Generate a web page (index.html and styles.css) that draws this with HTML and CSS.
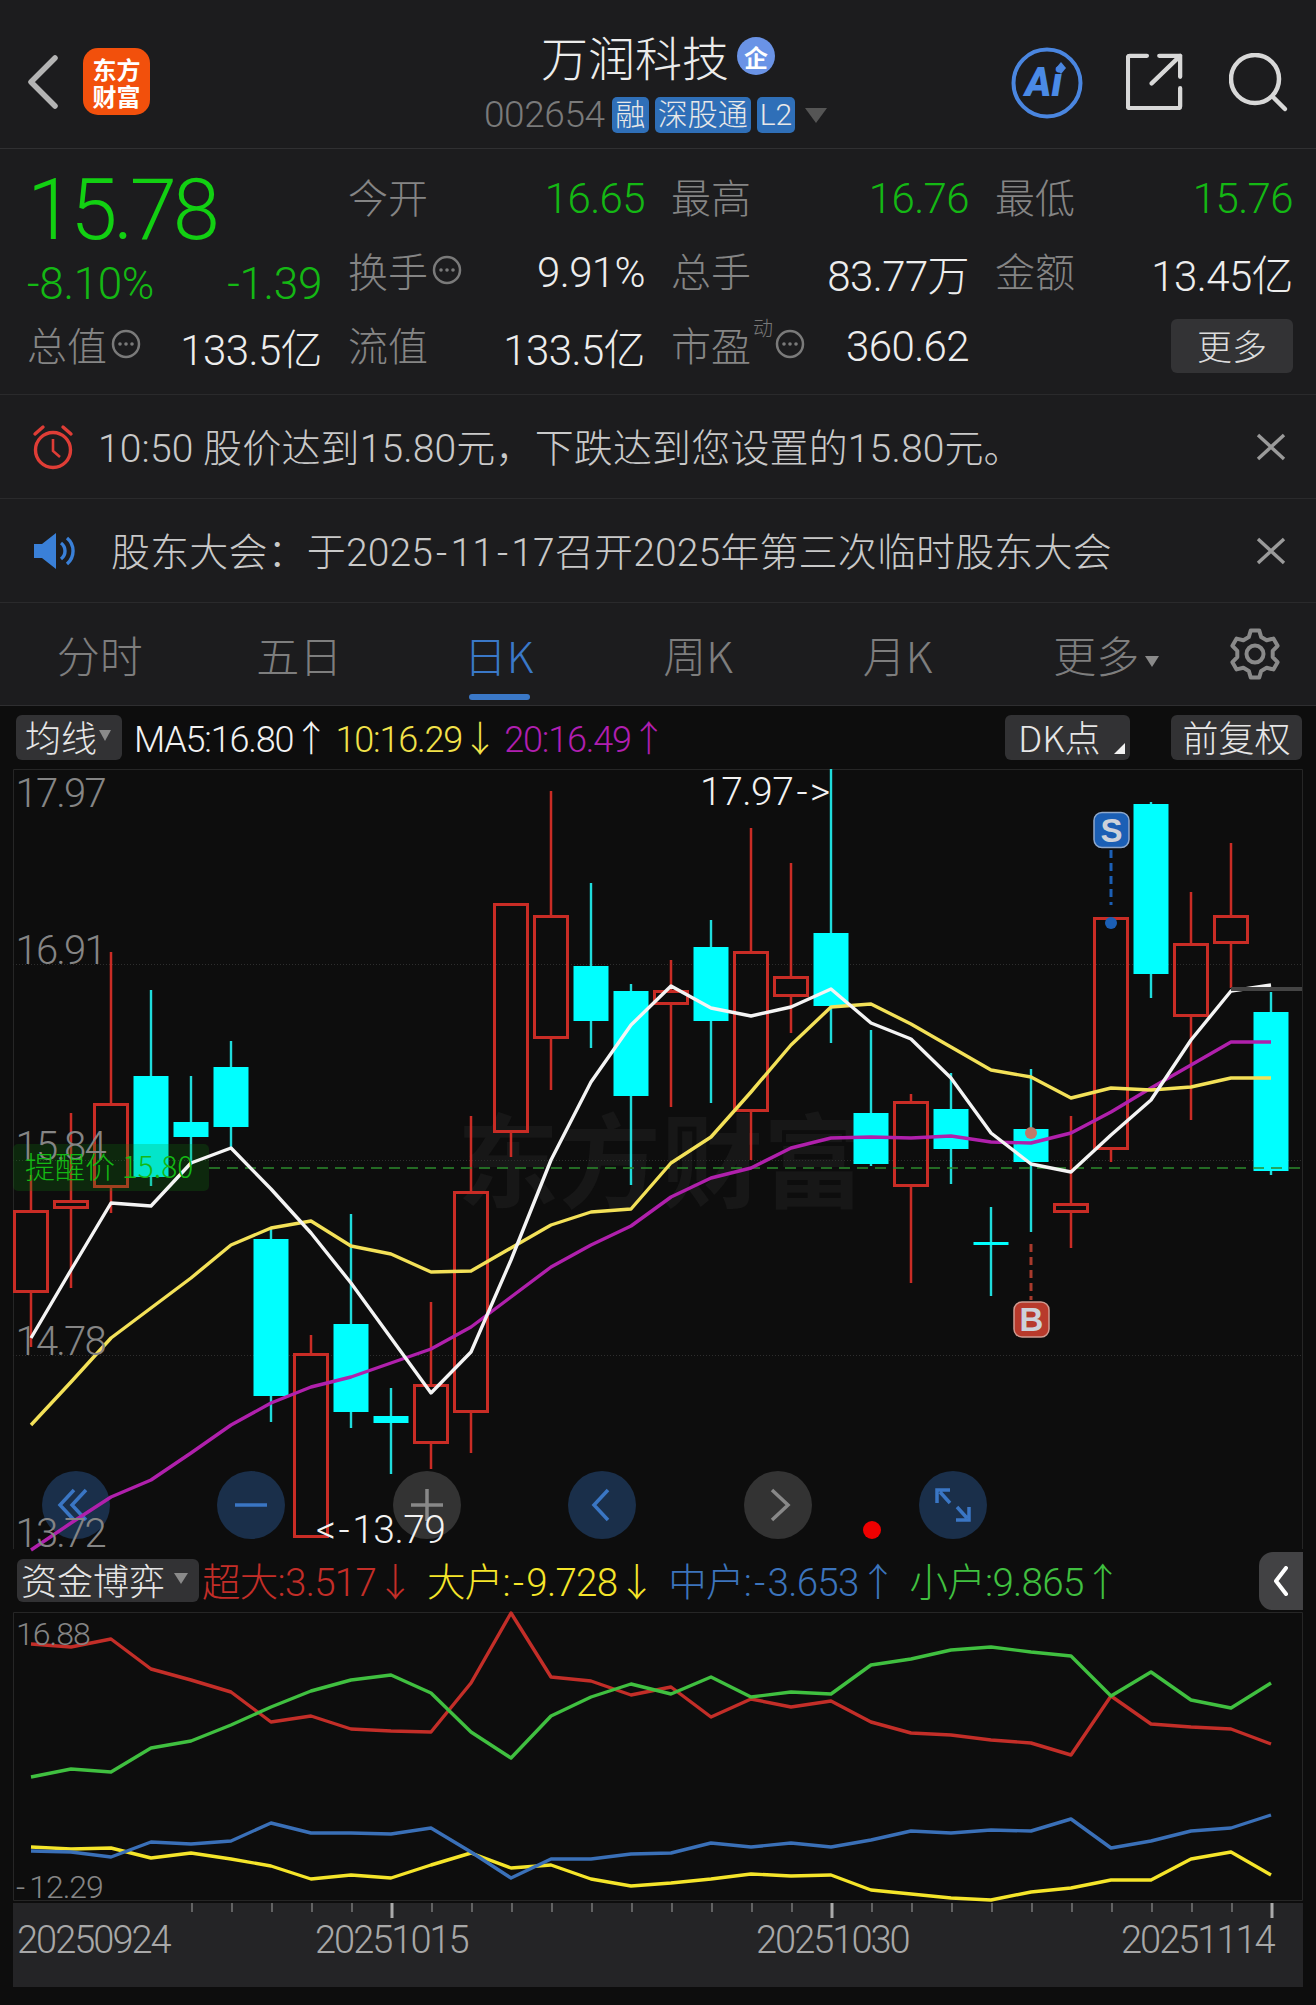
FILE: index.html
```html
<!DOCTYPE html>
<html lang="zh-CN">
<head>
<meta charset="utf-8">
<title>万润科技 002654</title>
<link rel="stylesheet" href="styles.css">
</head>
<body>
<svg class="defs" width="0" height="0" aria-hidden="true">
  <symbol id="more-dot" viewBox="0 0 30 30">
    <circle cx="15" cy="15" r="13" fill="none" stroke="#7a7a7a" stroke-width="2.5"/>
    <circle cx="9" cy="15" r="1.8" fill="#7a7a7a"/><circle cx="15" cy="15" r="1.8" fill="#7a7a7a"/><circle cx="21" cy="15" r="1.8" fill="#7a7a7a"/>
  </symbol>
  <symbol id="close-x" viewBox="0 0 30 28">
    <path d="M2 2L28 26M28 2L2 26" fill="none" stroke="#9a9a9a" stroke-width="3.4"/>
  </symbol>
</svg>

<header class="topbar">
  <div class="top-left">
    <svg class="back" width="32" height="54" viewBox="0 0 32 54"><path d="M28 3L4 27L28 51" fill="none" stroke="#b4b4b4" stroke-width="5.5" stroke-linecap="round" stroke-linejoin="round"/></svg>
    <div class="logo"><span>东方</span><span>财富</span></div>
  </div>
  <div class="top-center">
    <div class="title-row">
      <span class="title">万润科技</span>
      <span class="ent">企</span>
    </div>
    <div class="code-row">
      <span class="code">002654</span>
      <span class="tag">融</span>
      <span class="tag">深股通</span>
      <span class="tag">L2</span>
      <span class="tri"></span>
    </div>
  </div>
  <div class="top-right">
    <svg class="ai" width="72" height="72" viewBox="0 0 72 72">
      <circle cx="36" cy="36" r="33.5" fill="none" stroke="#4a86e0" stroke-width="4"/>
      <text class="ai-text" x="14" y="49">Ai</text>
      <path d="M50 15l5 6l-5 6l-5-6z" fill="#4a86e0"/>
    </svg>
    <svg class="share" width="57" height="57" viewBox="0 0 60 60">
      <path d="M22 3H4a2 2 0 0 0-2 2V56a2 2 0 0 0 2 2H55a2 2 0 0 0 2-2V37" fill="none" stroke="#d8d8d8" stroke-width="4.5" stroke-linecap="round"/>
      <path d="M27 32L57 3M35 3H57V25" fill="none" stroke="#d8d8d8" stroke-width="4.5" stroke-linecap="round" stroke-linejoin="round"/>
    </svg>
    <svg class="search" width="60" height="60" viewBox="0 0 60 60">
      <circle cx="26" cy="26" r="24" fill="none" stroke="#d8d8d8" stroke-width="4.5"/>
      <path d="M45 45L56 56" stroke="#d8d8d8" stroke-width="4.5" stroke-linecap="round"/>
    </svg>
  </div>
</header>

<section class="stats">
  <div class="price-block">
    <div class="price">15.78</div>
    <div class="change"><span>-8.10%</span><span>-1.39</span></div>
  </div>
  <div class="stat"><span class="label">今开</span><span class="value down">16.65</span></div>
  <div class="stat"><span class="label">最高</span><span class="value down">16.76</span></div>
  <div class="stat"><span class="label">最低</span><span class="value down">15.76</span></div>
  <div class="stat"><span class="label">换手<svg class="dot-ic"><use href="#more-dot"/></svg></span><span class="value">9.91%</span></div>
  <div class="stat"><span class="label">总手</span><span class="value">83.77万</span></div>
  <div class="stat"><span class="label">金额</span><span class="value">13.45亿</span></div>
  <div class="stat"><span class="label">总值<svg class="dot-ic"><use href="#more-dot"/></svg></span><span class="value">133.5亿</span></div>
  <div class="stat"><span class="label">流值</span><span class="value">133.5亿</span></div>
  <div class="stat"><span class="label">市盈<sup class="sup">动</sup><svg class="dot-ic"><use href="#more-dot"/></svg></span><span class="value">360.62</span></div>
  <div class="stat stat-more"><span class="more-btn">更多</span></div>
</section>

<div class="notice">
  <svg class="bell" width="42" height="46" viewBox="0 0 42 46">
    <circle cx="21" cy="26" r="17.5" fill="none" stroke="#df3d36" stroke-width="3.4"/>
    <path d="M21 15V27L28 33" fill="none" stroke="#df3d36" stroke-width="2.6"/>
    <path d="M3 10L11 3M39 10L31 3" fill="none" stroke="#df3d36" stroke-width="3.4" stroke-linecap="round"/>
  </svg>
  <span class="notice-text">10:50 股价达到15.80元，下跌达到您设置的15.80元。</span>
  <svg class="close"><use href="#close-x"/></svg>
</div>
<div class="notice notice-2">
  <svg class="horn" width="44" height="36" viewBox="0 0 44 36">
    <path d="M0 11H8L22 0V36L8 25H0z" fill="#3a80d8"/>
    <path d="M27 10a10 10 0 0 1 0 16M33 5a17 17 0 0 1 0 26" fill="none" stroke="#3a80d8" stroke-width="3.4"/>
  </svg>
  <span class="notice-text">股东大会：于2025<span class="hy">-</span>11<span class="hy">-</span>17召开2025年第三次临时股东大会</span>
  <svg class="close"><use href="#close-x"/></svg>
</div>

<nav class="tabs">
  <span class="tab">分时</span>
  <span class="tab">五日</span>
  <span class="tab tab-on">日K</span>
  <span class="tab">周K</span>
  <span class="tab">月K</span>
  <span class="tab tab-drop">更多<i class="tri-small"></i></span>
  <span class="tab-gear">
    <svg width="50" height="52" viewBox="0 0 50 50">
      <polygon points="18.8,8.1 20.8,1.4 29.2,1.4 31.2,8.1 36.6,11.2 43.4,9.6 47.6,16.8 42.7,21.9 42.7,28.1 47.6,33.2 43.4,40.4 36.6,38.8 31.2,41.9 29.2,48.6 20.8,48.6 18.8,41.9 13.4,38.8 6.6,40.4 2.4,33.2 7.3,28.1 7.3,21.9 2.4,16.8 6.6,9.6 13.4,11.2" fill="none" stroke="#8a8a8a" stroke-width="4" stroke-linejoin="round"/>
      <circle cx="25" cy="25" r="8.5" fill="none" stroke="#8a8a8a" stroke-width="4"/>
    </svg>
  </span>
</nav>

<main class="chart-zone">
  <div class="bar bar-ma">
    <span class="btn btn-ma">均线<i class="tri-small"></i></span>
    <span class="legend"><span class="c-white">MA5:16.80↑</span> <span class="c-yellow">10:16.29↓</span> <span class="c-magenta">20:16.49↑</span></span>
    <span class="bar-right">
      <span class="btn btn-dk">DK点<i class="corner"></i></span>
      <span class="btn btn-fq">前复权</span>
    </span>
  </div>

  <div class="plot">
    <svg class="main-svg" width="1290" height="781" viewBox="13 769 1290 781">
      <path class="frame" d="M13.5 1549V769.5H1302.5V1549"/>
      <text class="watermark" x="457" y="1200">东方财富</text>
      <path class="grid" d="M13 964.5H1302M13 1160.5H1302M13 1355.5H1302"/>

      <path class="wick-red" d="M31 1175V1210M31 1293V1347M71 1113V1200M71 1209V1288M111 952V1103M111 1188V1213M311 1335V1353M431 1302V1384M431 1444V1469M471 1116V1191M471 1413V1453M511 1133V1157M551 791V915M551 1039V1090M671 960V990M671 1005V1107M751 828V951M751 1112V1160M791 863V976M791 997V1033M911 1094V1101M911 1187V1283M1071 1116V1203M1071 1213V1248M1111 1150V1162M1191 892V943M1191 1017V1120M1231 843V915M1231 944V988"/>
      <path class="body-red" d="M14.5 1211.5h33v80h-33zM54.5 1201.5h33v6h-33zM94.5 1104.5h33v82h-33zM294.5 1354.5h33v182h-33zM414.5 1385.5h33v57h-33zM454.5 1192.5h33v219h-33zM494.5 904.5h33v227h-33zM534.5 916.5h33v121h-33zM654.5 991.5h33v12h-33zM734.5 952.5h33v158h-33zM774.5 977.5h33v18h-33zM894.5 1102.5h33v83h-33zM1054.5 1204.5h33v7h-33zM1094.5 918.5h33v230h-33zM1174.5 944.5h33v71h-33zM1214.5 916.5h33v26h-33z"/>
      <path class="wick-cyan" d="M151 990V1186M191 1076V1165M231 1041V1148M271 1228V1422M351 1214V1428M391 1388V1474M591 883V1048M631 984V1185M711 920V1103M831 769V1043M871 1030V1166M951 1073V1184M991 1207V1296M1031 1069V1232M1151 802V998M1271 992V1175"/>
      <path class="body-cyan" d="M133.5 1076h35v101h-35zM173.5 1122h35v15h-35zM213.5 1067h35v60h-35zM253.5 1239h35v157h-35zM333.5 1324h35v88h-35zM373.5 1416h35v7h-35zM573.5 966h35v55h-35zM613.5 991h35v105h-35zM693.5 947h35v74h-35zM813.5 933h35v73h-35zM853.5 1113h35v51h-35zM933.5 1109h35v40h-35zM973.5 1242h35v3h-35zM1013.5 1129h35v33h-35zM1133.5 804h35v170h-35zM1253.5 1012h35v159h-35z"/>

      <rect class="remind-bg" x="13" y="1144" width="196" height="47" rx="5"/>
      <path class="remind-line" d="M209 1168H1302"/>

      <g class="round-btns">
        <circle class="rb-blue" cx="76" cy="1505" r="34"/>
        <circle class="rb-blue" cx="251" cy="1505" r="34"/>
        <circle class="rb-gray" cx="427" cy="1505" r="34"/>
        <circle class="rb-blue" cx="602" cy="1505" r="34"/>
        <circle class="rb-gray" cx="778" cy="1505" r="34"/>
        <circle class="rb-blue" cx="953" cy="1505" r="34"/>
        <path class="rb-ic-blue" d="M74 1490L60 1505L74 1520M86 1490L72 1505L86 1520"/>
        <path class="rb-ic-blue" d="M235 1505H267"/>
        <path class="rb-ic-gray" d="M427 1489V1521M411 1505H443"/>
        <path class="rb-ic-blue" d="M608 1490L594 1505L608 1520"/>
        <path class="rb-ic-gray" d="M772 1490L788 1505L772 1520"/>
        <path class="rb-ic-blue" d="M940 1492L950 1503M937 1503V1490H950M967 1518L957 1507M969 1507V1520H956"/>
      </g>

      <polyline class="ma ma20" points="31,1550 71,1523 111,1497 151,1480 191,1453 231,1425 271,1403 311,1387 351,1377 391,1363 431,1349 471,1327 511,1297 551,1267 591,1245 631,1226 671,1197 711,1178 751,1168 791,1148 831,1138 871,1137 911,1138 951,1136 991,1142 1031,1143 1071,1133 1111,1112 1151,1088 1191,1065 1231,1042 1271,1042"/>
      <polyline class="ma ma10" points="31,1425 71,1382 111,1338 151,1308 191,1278 231,1245 271,1228 311,1221 351,1246 391,1254 431,1272 471,1271 511,1248 551,1225 591,1212 631,1209 671,1163 711,1137 751,1092 791,1045 831,1007 871,1004 911,1024 951,1047 991,1070 1031,1077 1071,1098 1111,1088 1151,1090 1191,1087 1231,1078 1271,1078"/>
      <polyline class="ma ma5" points="31,1338 71,1270 111,1203 151,1206 191,1163 231,1148 271,1189 311,1233 351,1283 391,1338 431,1393 471,1352 511,1260 551,1160 591,1082 631,1025 671,986 711,1008 751,1016 791,1007 831,989 871,1023 911,1039 951,1078 991,1133 1031,1164 1071,1172 1111,1135 1151,1100 1191,1040 1231,991 1271,985"/>
      <path class="last-bar" d="M1231 989H1302"/>

      <text class="axis-main" x="15.5" y="807">17.97</text>
      <text class="axis-main" x="15.5" y="964">16.91</text>
      <text class="axis-main" x="15.5" y="1160">15.84</text>
      <text class="axis-main" x="15.5" y="1355">14.78</text>
      <text class="axis-main" x="15.5" y="1547">13.72</text>
      <text class="remind-text" x="25" y="1178">提醒价 15.80</text>
      <text class="extreme" x="700" y="805">17.97<tspan dx="3">-</tspan><tspan dx="3">&gt;</tspan></text>
      <text class="extreme" x="316" y="1543">&lt;<tspan dx="3">-</tspan><tspan dx="3">13.79</tspan></text>

      <path class="dash-blue" d="M1111 850V905"/>
      <circle class="dot-blue" cx="1111" cy="923" r="6"/>
      <rect class="badge-s" x="1094" y="812.5" width="35" height="35" rx="8"/>
      <text class="badge-text" x="1111.5" y="842">S</text>
      <path class="dash-red" d="M1031 1244V1300"/>
      <circle class="dot-brown" cx="1031" cy="1133" r="6"/>
      <rect class="badge-b" x="1014" y="1302" width="35" height="35" rx="8"/>
      <text class="badge-text" x="1031.5" y="1331">B</text>
      <circle class="dot-red" cx="872" cy="1530" r="9"/>
    </svg>
  </div>

  <div class="bar bar-fund">
    <span class="btn btn-fund">资金博弈<i class="tri-small"></i></span>
    <span class="fund-legend">
      <span class="c-red">超大:3.517↓</span>
      <span class="c-yel2">大户:<span class="hy">-</span>9.728↓</span>
      <span class="c-blue">中户:<span class="hy">-</span>3.653↑</span>
      <span class="c-green">小户:9.865↑</span>
    </span>
    <span class="collapse"><svg width="14" height="30" viewBox="0 0 14 30"><path d="M12 2L2 15L12 28" fill="none" stroke="#fff" stroke-width="4" stroke-linecap="round" stroke-linejoin="round"/></svg></span>
  </div>

  <div class="plot">
    <svg class="sub-svg" width="1290" height="291" viewBox="13 1611 1290 291">
      <path class="frame" d="M13.5 1900.5V1612.5H1302.5V1900.5Z"/>
      <polyline class="fl f-red" points="31,1644 71,1647 111,1639 151,1669 191,1680 231,1692 271,1722 311,1716 351,1729 391,1731 431,1732 471,1683 511,1613 551,1677 591,1681 631,1695 671,1687 711,1717 751,1699 791,1707 831,1701 871,1722 911,1733 951,1735 991,1740 1031,1743 1071,1755 1111,1696 1151,1724 1191,1727 1231,1729 1271,1744"/>
      <polyline class="fl f-green" points="31,1777 71,1769 111,1772 151,1748 191,1741 231,1725 271,1707 311,1691 351,1680 391,1675 431,1693 471,1732 511,1758 551,1716 591,1697 631,1684 671,1694 711,1677 751,1697 791,1692 831,1694 871,1665 911,1659 951,1650 991,1647 1031,1652 1071,1656 1111,1696 1151,1672 1191,1700 1231,1708 1271,1683"/>
      <polyline class="fl f-yellow" points="31,1847 71,1849 111,1848 151,1858 191,1853 231,1859 271,1866 311,1879 351,1875 391,1878 431,1865 471,1853 511,1868 551,1865 591,1879 631,1886 671,1883 711,1879 751,1874 791,1876 831,1875 871,1890 911,1894 951,1898 991,1900 1031,1892 1071,1888 1111,1880 1151,1880 1191,1859 1231,1852 1271,1875"/>
      <polyline class="fl f-blue" points="31,1851 71,1852 111,1857 151,1842 191,1844 231,1841 271,1823 311,1833 351,1833 391,1834 431,1828 471,1852 511,1878 551,1859 591,1859 631,1854 671,1853 711,1843 751,1847 791,1843 831,1847 871,1840 911,1831 951,1833 991,1830 1031,1831 1071,1819 1111,1848 1151,1841 1191,1831 1231,1828 1271,1815"/>
      <text class="axis-sub" x="16" y="1645">16.88</text>
      <text class="axis-sub" x="16" y="1898"><tspan>-</tspan><tspan dx="5">12.29</tspan></text>
    </svg>
  </div>

  <div class="axis">
    <svg class="axis-svg" width="1290" height="84" viewBox="13 1903 1290 84">
      <path class="tick" d="M192 1903v9M232 1903v9M272 1903v9M312 1903v9M352 1903v9M432 1903v9M472 1903v9M512 1903v9M552 1903v9M592 1903v9M632 1903v9M672 1903v9M712 1903v9M752 1903v9M792 1903v9M872 1903v9M912 1903v9M952 1903v9M992 1903v9M1032 1903v9M1072 1903v9M1112 1903v9M1152 1903v9M1192 1903v9M1232 1903v9"/>
      <path class="tick-major" d="M392 1903v15M832 1903v15M1272 1903v15"/>
      <text class="date" x="17" y="1953">20250924</text>
      <text class="date" x="315" y="1953">20251015</text>
      <text class="date" x="756" y="1953">20251030</text>
      <text class="date" x="1121" y="1953">20251114</text>
    </svg>
  </div>
</main>
</body>
</html>
```
FILE: styles.css
```css
* { box-sizing: border-box; }
html, body { margin: 0; padding: 0; }
body {
  width: 1316px;
  height: 2005px;
  overflow: hidden;
  background: #0c0c0c;
  color: #e6e6e6;
  font-family: Roboto, "Noto Sans CJK SC", sans-serif;
  font-weight: 300;
}
.defs { position: absolute; }
.hy { padding: 0 3px; }

/* header */
.topbar {
  display: grid;
  grid-template-columns: 1fr auto 1fr;
  align-items: start;
  height: 149px;
  background: #1c1c1e;
  border-bottom: 1px solid #303032;
}
.top-left { display: flex; align-items: center; gap: 24px; padding: 48px 0 0 27px; }
.back { flex: none; }
.logo {
  display: flex;
  flex-direction: column;
  align-items: center;
  justify-content: center;
  width: 67px;
  height: 67px;
  border-radius: 15px;
  background: #f2500c;
  color: #fff;
  font-family: "Noto Sans CJK SC", sans-serif;
  font-weight: 700;
  font-size: 24px;
  line-height: 27px;
}
.top-center { display: flex; flex-direction: column; align-items: center; padding-top: 28px; }
.title-row { display: flex; align-items: center; gap: 8px; height: 56px; }
.title { font-size: 47px; line-height: 56px; color: #ececec; font-family: "Noto Sans CJK SC", sans-serif; font-weight: 300; }
.ent {
  display: flex;
  align-items: center;
  justify-content: center;
  width: 38px;
  height: 38px;
  border-radius: 50%;
  background: #6a93e6;
  color: #fff;
  font-size: 24px;
  font-weight: 700;
  font-family: "Noto Sans CJK SC", sans-serif;
}
.code-row { display: flex; align-items: center; gap: 6px; height: 36px; margin: 13px 5px 0 0; }
.code { font-size: 37px; line-height: 36px; color: #7a7a7a; margin-right: 1px; letter-spacing: -0.4px; }
.tag {
  display: flex;
  align-items: center;
  justify-content: center;
  height: 36px;
  min-width: 37px;
  padding: 0 3px;
  border-radius: 5px;
  background: #2f6fb8;
  color: #e8e8e8;
  font-size: 30px;
  line-height: 36px;
}
.tri {
  width: 0; height: 0;
  margin-left: 4px;
  border-left: 11px solid transparent;
  border-right: 11px solid transparent;
  border-top: 15px solid #555;
}
.top-right { display: flex; align-items: flex-start; justify-content: flex-end; padding: 47px 27px 0 0; gap: 43px; }
.ai-text { font-family: Roboto, sans-serif; font-weight: 900; font-style: italic; font-size: 40px; fill: #4a8ae6; }
.share { margin-top: 6px; }
.search { margin: 6px 0 0 3px; }

/* stats */
.stats {
  display: grid;
  grid-template-columns: 295px 297px 298px 298px;
  grid-template-rows: repeat(3, 74px);
  column-gap: 26px;
  height: 246px;
  padding: 12px 0 0 27px;
  background: #1c1c1e;
  border-bottom: 1px solid #2a2a2c;
}
.price-block { grid-row: span 2; display: flex; flex-direction: column; }
.price { font-size: 85px; line-height: 98px; color: #12d012; letter-spacing: -4px; font-weight: 300; }
.change { display: flex; justify-content: space-between; font-size: 44px; line-height: 50px; color: #14b814; letter-spacing: -0.3px; }
.stat { display: flex; align-items: center; justify-content: space-between; font-size: 42px; }
.label { display: flex; align-items: center; margin-top: -4px; font-size: 40px; color: #858585; font-family: "Noto Sans CJK SC", sans-serif; font-weight: 300; }
.value { color: #ededed; letter-spacing: -0.6px; }
.value.down { color: #14b814; }
.dot-ic { width: 30px; height: 30px; margin-left: 4px; }
.sup { font-size: 20px; line-height: 20px; margin: -32px -2px 0 2px; color: #777; }
.stat-more { justify-content: flex-end; }
.more-btn {
  width: 122px;
  height: 54px;
  border-radius: 6px;
  background: #333335;
  color: #dcdcdc;
  font-size: 35px;
  line-height: 52px;
  text-align: center;
  font-family: "Noto Sans CJK SC", sans-serif;
}

/* notices */
.notice {
  display: flex;
  align-items: center;
  height: 104px;
  padding: 0 30px 0 32px;
  background: #1c1c1e;
  border-bottom: 1px solid #2a2a2c;
}
.notice-text { flex: 1; margin: 0 0 4px 24px; font-size: 39px; color: #c9c9c9; white-space: nowrap; letter-spacing: 0.15px; }
.notice-2 .notice-text { margin-left: 33px; letter-spacing: 0.15px; }
.notice-2 { padding-left: 34px; }
.close { flex: none; width: 30px; height: 28px; }

/* tabs */
.tabs {
  display: flex;
  align-items: center;
  height: 103px;
  background: #1c1c1e;
  border-bottom: 1px solid #2e2e30;
}
.tab {
  position: relative;
  width: 199.5px;
  text-align: center;
  font-size: 43px;
  line-height: 102px;
  color: #7e7e7e;
  font-family: "Noto Sans CJK SC", Roboto, sans-serif;
}
.tab-on { color: #3a78c8; }
.tab-on::after {
  content: "";
  position: absolute;
  left: 70px;
  bottom: 5px;
  width: 61px;
  height: 6px;
  border-radius: 3px;
  background: #3a78c8;
}
.tab-drop { padding-left: 18px; }
.tri-small {
  display: inline-block;
  width: 0; height: 0;
  margin-left: 6px;
  vertical-align: middle;
  border-left: 7px solid transparent;
  border-right: 7px solid transparent;
  border-top: 11px solid #8a8a8a;
}
.tab-gear { flex: 1; display: flex; justify-content: center; align-items: center; height: 102px; padding-right: 4px; }

/* chart zone */
.chart-zone { background: #0d0d0d; height: 1299px; }
.bar { display: flex; align-items: center; padding-left: 16px; }
.bar-ma { height: 63px; }
.btn {
  display: inline-flex;
  align-items: center;
  height: 45px;
  padding-bottom: 4px;
  border-radius: 6px;
  background: #323234;
  color: #e6e6e6;
  font-size: 36px;
  font-family: "Noto Sans CJK SC", Roboto, sans-serif;
}
.btn-ma { width: 106px; padding-left: 9px; }
.btn-ma .tri-small { margin-left: 2px; border-left-width: 6px; border-right-width: 6px; }
.legend { margin: 0 0 4px 12px; font-size: 36px; letter-spacing: -1.2px; white-space: nowrap; }
.c-white { color: #f2f2f2; }
.c-yellow { color: #f2e24a; }
.c-magenta { color: #b01fb0; }
.bar-right { margin-left: auto; display: flex; gap: 41px; padding-right: 14px; }
.btn-dk { position: relative; width: 125px; padding-left: 13px; }
.corner {
  position: absolute;
  right: 5px;
  bottom: 6px;
  width: 0; height: 0;
  border-left: 11px solid transparent;
  border-bottom: 11px solid #f2f2f2;
}
.btn-fq { width: 131px; justify-content: center; }

.plot { display: block; padding-left: 13px; }
.main-svg, .sub-svg, .axis-svg { display: block; overflow: visible; }
.frame { fill: none; stroke: #262626; stroke-width: 1; }
.watermark { font-family: "Noto Sans CJK SC", sans-serif; font-weight: 700; font-size: 102px; fill: #171717; }
.grid { fill: none; stroke: #2e2e2e; stroke-width: 1; stroke-dasharray: 1 2; }
.wick-red { fill: none; stroke: #c92c25; stroke-width: 2.5; }
.body-red { fill: none; stroke: #c92c25; stroke-width: 3; }
.wick-cyan { fill: none; stroke: #1fdcdc; stroke-width: 2.4; }
.body-cyan { fill: #00ffff; }
.remind-bg { fill: #0d8a0d; fill-opacity: 0.22; }
.remind-line { fill: none; stroke: #2c8a2c; stroke-width: 1.5; stroke-dasharray: 11 7; }
.rb-blue { fill: #1a2f4a; }
.rb-gray { fill: #333; }
.rb-ic-blue { fill: none; stroke: #3a76c4; stroke-width: 3.5; }
.rb-ic-gray { fill: none; stroke: #888; stroke-width: 3.5; }
.ma { fill: none; stroke-linejoin: round; stroke-width: 3.4; }
.ma5 { stroke: #f4f4f4; }
.ma10 { stroke: #f3e158; }
.ma20 { stroke: #b020ac; }
.last-bar { fill: none; stroke: #444; stroke-width: 4; }
.axis-main { font-size: 40px; fill: #858585; letter-spacing: -1.8px; }
.remind-text { font-size: 30px; fill: #14b814; font-family: "Noto Sans CJK SC", Roboto, sans-serif; }
.extreme { font-size: 39px; fill: #f2f2f2; letter-spacing: -0.5px; }
.dash-blue { fill: none; stroke: #1b5fb5; stroke-width: 3; stroke-dasharray: 8 5; }
.dash-red { fill: none; stroke: #a83a2c; stroke-width: 3; stroke-dasharray: 8 5; }
.dot-blue { fill: #1b5fb5; }
.dot-brown { fill: #c07a68; }
.dot-red { fill: #f00000; }
.badge-s { fill: #1b5fb5; stroke: #8ea8cc; stroke-width: 1.5; }
.badge-b { fill: #b83a2c; stroke: #d09a90; stroke-width: 1.5; }
.badge-text { font-family: "Liberation Sans", sans-serif; font-weight: 700; font-size: 33px; fill: #cdd2da; text-anchor: middle; }

.bar-fund { position: relative; height: 61px; padding-left: 17px; }
.btn-fund { width: 182px; height: 43px; padding-left: 4px; }
.btn-fund .tri-small { margin-left: 9px; border-left-width: 7px; border-right-width: 7px; }
.fund-legend { display: flex; gap: 13px; margin: 0 0 4px 3px; font-size: 38.5px; letter-spacing: -0.7px; white-space: nowrap; }
.c-red { color: #c32e28; }
.c-yel2 { color: #f5e52a; }
.c-blue { color: #3c74bc; }
.c-green { color: #40c040; }
.collapse {
  position: absolute;
  left: 1259px;
  top: 2px;
  display: flex;
  align-items: center;
  justify-content: center;
  width: 44px;
  height: 58px;
  border-radius: 14px 0 0 14px;
  background: #424244;
}
.fl { fill: none; stroke-width: 3.4; stroke-linejoin: round; }
.f-red { stroke: #c32e28; }
.f-green { stroke: #40c040; }
.f-blue { stroke: #3a70b8; }
.f-yellow { stroke: #f5e52a; }
.axis-sub { font-size: 32px; fill: #858585; letter-spacing: -1px; }

.axis { margin: 1px 0 0 13px; width: 1290px; height: 84px; background: #242426; }
.tick { fill: none; stroke: #777; stroke-width: 1.5; }
.tick-major { fill: none; stroke: #aaa; stroke-width: 3; }
.date { font-size: 38px; fill: #a8a8a8; letter-spacing: -2px; }
```
